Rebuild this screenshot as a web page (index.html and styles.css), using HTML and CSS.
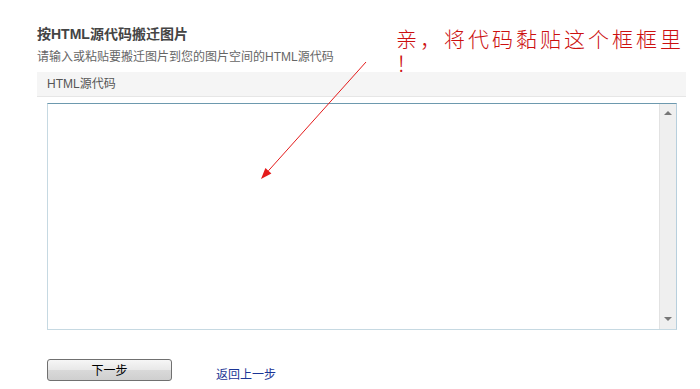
FILE: index.html
```html
<!DOCTYPE html>
<html lang="zh-CN">

<head>
  <meta charset="utf-8" />
  <title>按HTML源代码搬迁图片</title>
  <link rel="stylesheet" href="styles.css">
</head>

<body>
  <div class="page">
    <h1 class="title">按HTML源代码搬迁图片</h1>
    <p class="hint">请输入或粘贴要搬迁图片到您的图片空间的HTML源代码</p>
    <div class="panel-head">HTML源代码</div>
    <div class="code-box">
      <textarea class="code-input"></textarea>
      <div class="scrollbar">
        <span class="arrow-up"></span>
        <span class="arrow-down"></span>
      </div>
    </div>
    <div class="actions">
      <button class="btn-next">下一步</button>
      <a href="#" class="back-link">返回上一步</a>
    </div>
  </div>

  <!-- annotation drawn over the page -->
  <div class="note">亲，将代码黏贴这个框框里！</div>
  <svg class="note-arrow" width="700" height="389" viewBox="0 0 700 389">
    <line x1="366" y1="62" x2="268.4" y2="170.8" stroke="#e41b1b" stroke-width="1" />
    <polygon points="261,179 271.4,173.5 265.4,168.1" fill="#e41b1b" />
  </svg>
</body>

</html>
```

FILE: styles.css
```css
body {
  margin: 0;
  font-family: "Liberation Sans", "Noto Sans CJK SC", sans-serif;
  background-color: #fff;
}

.page {
  width: 649px;
  padding: 24px 0 0 37px;
}

.title {
  margin: 0;
  font-size: 14px;
  line-height: 20px;
  font-weight: bold;
  color: #444;
}

.hint {
  margin: 4px 0 0 0;
  font-size: 12px;
  line-height: 18px;
  color: #666;
}

.panel-head {
  margin-top: 6px;
  padding-left: 10px;
  height: 24px;
  line-height: 24px;
  font-size: 12px;
  color: #555;
  background-color: #f5f5f5;
  border-bottom: 1px solid #e6e6e6;
}

.code-box {
  display: flex;
  margin: 6px 0 0 10px;
  width: 628px;
  height: 225px;
  border: 1px solid #c6d9e2;
  border-top-color: #6d99ae;
  border-right-color: #b7cfdd;
}

.code-input {
  flex: 1;
  border: 0;
  margin: 0;
  padding: 2px;
  resize: none;
  outline: none;
  font-size: 12px;
  font-family: "Liberation Mono", monospace;
}

.scrollbar {
  width: 16px;
  display: flex;
  flex-direction: column;
  justify-content: space-between;
  align-items: center;
  padding: 7px 0 8px 0;
  background-color: #efefef;
  border-left: 1px solid #e2e2e2;
}

.arrow-up,
.arrow-down {
  width: 0;
  height: 0;
  border-left: 4px solid transparent;
  border-right: 4px solid transparent;
}

.arrow-up {
  border-bottom: 4px solid #777;
}

.arrow-down {
  border-top: 4px solid #777;
}

.actions {
  display: flex;
  align-items: center;
  margin: 27px 0 0 10px;
}

.btn-next {
  width: 125px;
  height: 22px;
  padding: 0;
  font-size: 12px;
  font-family: "Liberation Sans", "Noto Sans CJK SC", sans-serif;
  color: #000;
  border: 1px solid #707070;
  border-radius: 3px;
  background: linear-gradient(#f6f6f6, #e8e8e8 50%, #d9d9d9 51%, #cfcfcf);
}

.back-link {
  margin: 8px 0 0 44px;
  font-size: 12px;
  color: #1b3595;
  text-decoration: none;
}

.note {
  position: absolute;
  left: 396px;
  top: 26px;
  width: 292px;
  font-family: "Noto Sans CJK SC", sans-serif;
  font-size: 21px;
  font-weight: 300;
  line-height: 24px;
  letter-spacing: 3px;
  line-break: anywhere;
  color: #cc1010;
}

.note-arrow {
  position: absolute;
  left: 0;
  top: 0;
  pointer-events: none;
}
```
